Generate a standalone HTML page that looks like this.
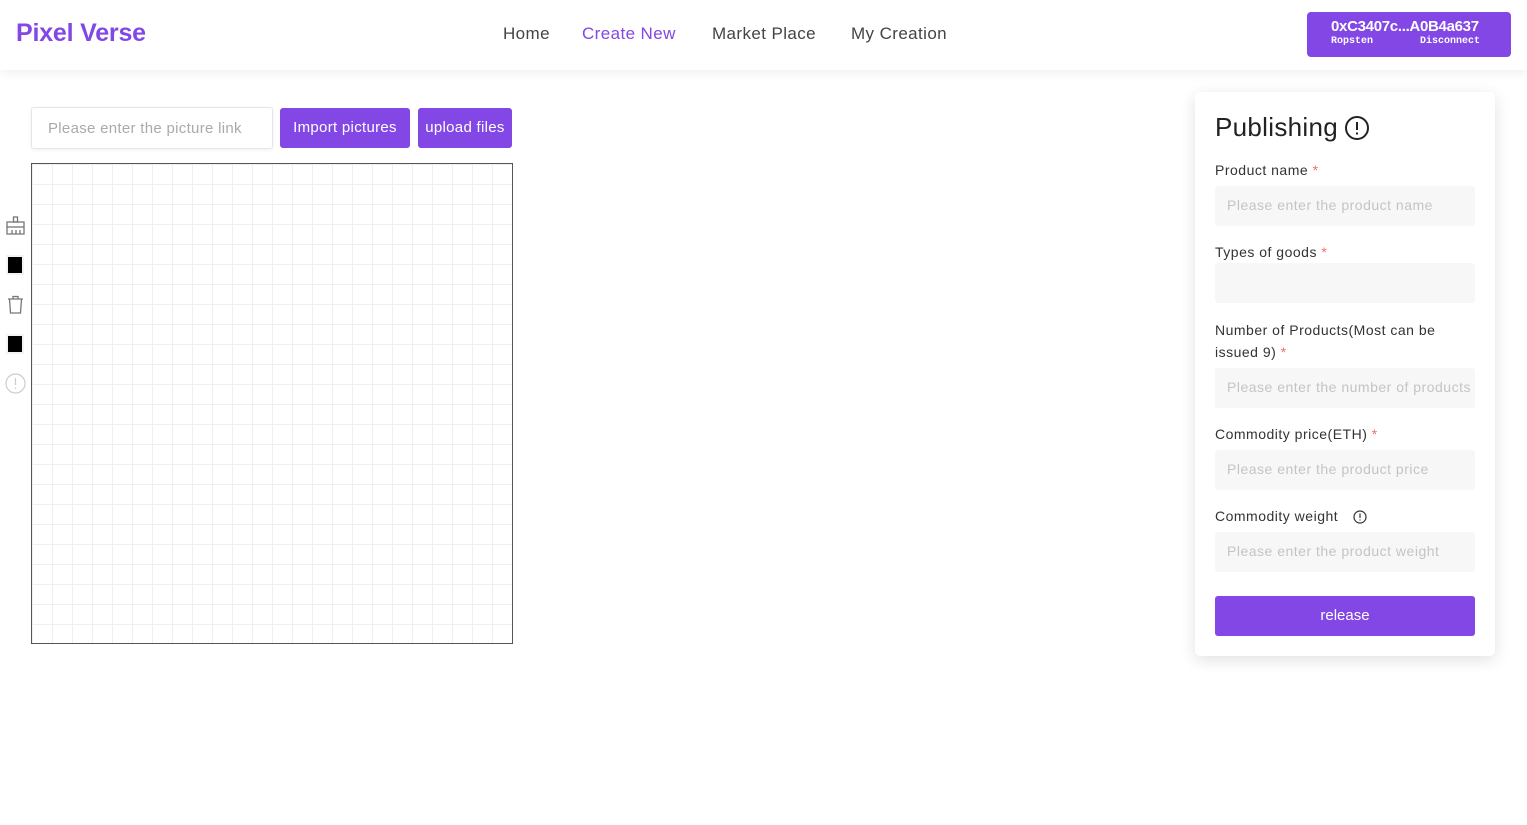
<!DOCTYPE html>
<html><head><meta charset="utf-8"><style>
*{box-sizing:border-box;margin:0;padding:0}
body{width:1527px;height:825px;background:#fff;font-family:"Liberation Sans",sans-serif;position:relative;overflow:hidden;color:#333}
.hdr{position:absolute;left:0;top:0;width:1527px;height:70px;background:#fff;box-shadow:0 2px 12px rgba(0,0,0,.07)}
.logo{position:absolute;left:16px;top:19px;font-size:25px;color:#8247e5;font-weight:bold;letter-spacing:-.2px}
.nav{position:absolute;top:24px;font-size:17px;color:#444;letter-spacing:.4px}
.wallet{position:absolute;left:1307px;top:12px;width:204px;height:45px;background:#8247e5;border-radius:4px;color:#fff}
.abs{position:absolute}
.inp{position:absolute;left:31px;top:107px;width:242px;height:42px;border:1px solid #e6e6e6;border-radius:3px;box-shadow:0 1px 4px rgba(0,0,0,.06);font-size:15px;color:#aaa;padding:12px 16px;letter-spacing:.3px}
.btn{position:absolute;top:108px;height:40px;background:#8247e5;color:#fff;font-size:15px;border-radius:3px;text-align:center;line-height:40px;letter-spacing:.3px}
.grid{position:absolute;left:31px;top:163px;width:482px;height:481px;border:1px solid #555;background-color:#fff;background-image:linear-gradient(#efefef 1px,transparent 1px),linear-gradient(90deg,#efefef 1px,transparent 1px);background-size:20px 20px;background-position:0 0}
.card{position:absolute;left:1195px;top:92px;width:300px;height:564px;background:#fff;border-radius:5px;box-shadow:0 4px 16px rgba(0,0,0,.12)}
.lbl{position:absolute;left:20px;font-size:14px;color:#333;line-height:22px;letter-spacing:.5px}
.lbl b{color:#f56c6c;font-weight:normal}
.fld{position:absolute;left:20px;width:260px;height:40px;background:#f7f7f7;border-radius:3px;font-size:14px;color:#c4c4c4;padding:11px 12px;white-space:nowrap;overflow:hidden;letter-spacing:.5px}
.sw{position:absolute;left:6px;width:18px;height:20px;background:#f3f3f3}
.sw i{position:absolute;left:2px;top:2px;width:14px;height:16px;background:#000}
</style></head><body>
<div class="hdr">
<div class="logo">Pixel Verse</div>
<div class="nav" style="left:503px">Home</div>
<div class="nav" style="left:582px;color:#8247e5">Create New</div>
<div class="nav" style="left:712px">Market Place</div>
<div class="nav" style="left:851px">My Creation</div>
<div class="wallet">
<div class="abs" style="left:24px;top:6px;font-size:15px;font-weight:bold;letter-spacing:-.3px">0xC3407c...A0B4a637</div>
<div class="abs" style="left:24px;top:24px;font-size:10px;font-family:'Liberation Mono',monospace;font-weight:bold">Ropsten</div>
<div class="abs" style="left:113px;top:24px;font-size:10px;font-family:'Liberation Mono',monospace;font-weight:bold">Disconnect</div>
</div>
</div>
<div class="inp">Please enter the picture link</div>
<div class="btn" style="left:280px;width:130px">Import pictures</div>
<div class="btn" style="left:418px;width:94px">upload files</div>
<div class="grid"></div>
<svg class="abs" style="left:6px;top:216px" width="19" height="20" viewBox="0 0 19 20" fill="none" stroke="#777" stroke-width="1.3"><rect x="7.5" y="1" width="4" height="5"/><rect x="1" y="6" width="17" height="5"/><path d="M1 11v7h17v-7M6 14v4M10 14v4M14 14v4"/></svg>
<div class="sw" style="top:255px"><i></i></div>
<svg class="abs" style="left:7px;top:295px" width="17" height="19" viewBox="0 0 17 19" fill="none" stroke="#777" stroke-width="1.3"><path d="M1 4h15M6 4V1.5h5V4M2.5 4l1 14h10l1-14"/></svg>
<div class="sw" style="top:334px"><i></i></div>
<svg class="abs" style="left:5px;top:373px" width="21" height="21" viewBox="0 0 21 21" fill="none" stroke="#ccc" stroke-width="1.2"><circle cx="10.5" cy="10.5" r="9.5"/><path d="M10.5 5v7M10.5 14.5v1.5"/></svg>
<div class="card">
<div class="abs" style="left:20px;top:20px;font-size:26px;color:#222;letter-spacing:.3px">Publishing</div>
<svg class="abs" style="left:149px;top:23px" width="26" height="26" viewBox="0 0 26 26" fill="none" stroke="#222" stroke-width="2"><circle cx="13" cy="13" r="11"/><path d="M13 7v8M13 17.5v2"/></svg>
<div class="lbl" style="top:67px">Product name <b>*</b></div>
<div class="fld" style="top:94px">Please enter the product name</div>
<div class="lbl" style="top:149px">Types of goods <b>*</b></div>
<div class="fld" style="top:171px"></div>
<div class="lbl" style="top:227px;width:255px">Number of Products(Most can be issued 9) <b>*</b></div>
<div class="fld" style="top:276px">Please enter the number of products</div>
<div class="lbl" style="top:331px">Commodity price(ETH) <b>*</b></div>
<div class="fld" style="top:358px">Please enter the product price</div>
<div class="lbl" style="top:413px">Commodity weight</div>
<svg class="abs" style="left:158px;top:418px" width="14" height="14" viewBox="0 0 14 14" fill="none" stroke="#333" stroke-width="1.2"><circle cx="7" cy="7" r="6"/><path d="M7 3.5v4.5M7 9.5v1"/></svg>
<div class="fld" style="top:440px">Please enter the product weight</div>
<div class="abs" style="left:20px;top:504px;width:260px;height:40px;background:#8247e5;border-radius:3px;color:#fff;font-size:15px;text-align:center;line-height:40px">release</div>
</div>
</body></html>
